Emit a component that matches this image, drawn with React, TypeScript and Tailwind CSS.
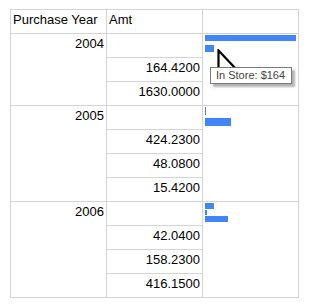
import { FC } from "react";

type Bar = { w: number; h: number; gap: number };

type Group = {
  year: string;
  amts: string[];
  bars: Bar[];
};

const groups: Group[] = [
  {
    year: "2004",
    amts: ["", "164.4200", "1630.0000"],
    bars: [
      { w: 91, h: 6, gap: 1 },
      { w: 9, h: 7, gap: 4 },
    ],
  },
  {
    year: "2005",
    amts: ["", "424.2300", "48.0800", "15.4200"],
    bars: [
      { w: 1, h: 8, gap: 1 },
      { w: 26, h: 8, gap: 3 },
    ],
  },
  {
    year: "2006",
    amts: ["", "42.0400", "158.2300", "416.1500"],
    bars: [
      { w: 9, h: 6, gap: 1 },
      { w: 2, h: 5, gap: 1 },
      { w: 23, h: 6, gap: 1 },
    ],
  },
];

const cell = "border-r border-b border-[#d4d4d4] px-[2px] pt-[2px] leading-[15px]";

const spanClass: Record<number, string> = {
  3: "row-span-3",
  4: "row-span-4",
};

const MiniBars: FC<{ bars: Bar[] }> = ({ bars }) => (
  <div className="flex flex-col items-start pl-[2px]">
    {bars.map((b, i) => (
      <div
        key={i}
        className="bg-[#4285f4]"
        style={{ width: b.w, height: b.h, marginTop: b.gap }}
      />
    ))}
  </div>
);

const Cursor: FC = () => (
  <svg
    className="absolute left-[217px] top-[49px]"
    width="26"
    height="32"
    viewBox="0 0 26 32"
  >
    <path
      d="M1.5 1.5 L1.5 27 L7 21.5 L11 30 L14.5 28.5 L10.5 20 L19 20 Z"
      fill="#ffffff"
      stroke="#000000"
      strokeWidth="2.2"
      strokeLinejoin="miter"
    />
  </svg>
);

const Tooltip: FC = () => (
  <div className="absolute left-[210px] top-[67px] h-[17px] w-[82px] border border-[#7a7a7a] bg-white shadow-[3px_3px_2px_rgba(0,0,0,0.3)] pl-[5px] text-[11px] leading-[15px] text-[#444444]">
    In Store: $164
  </div>
);

const App: FC = () => {
  return (
    <div
      className="relative h-[305px] w-[316px] bg-white text-[13px] text-black"
      style={{ fontFamily: '"Liberation Sans", Arial, sans-serif' }}
    >
      <div className="ml-[10px] pt-[9px]">
        <div className="grid w-[289px] grid-cols-[96px_96px_96px] auto-rows-[24px] border-l border-t border-[#d4d4d4]">
          <div className={cell}>Purchase Year</div>
          <div className={cell}>Amt</div>
          <div className={cell}></div>
          {groups.map((g) => [
            <div
              key={g.year + "-y"}
              className={`${cell} col-start-1 text-right ${spanClass[g.amts.length]}`}
            >
              {g.year}
            </div>,
            <div key={g.year + "-a0"} className={`${cell} col-start-2 text-right`}>
              {g.amts[0]}
            </div>,
            <div
              key={g.year + "-c"}
              className={`border-r border-b border-[#d4d4d4] col-start-3 ${spanClass[g.amts.length]}`}
            >
              <MiniBars bars={g.bars} />
            </div>,
            ...g.amts.slice(1).map((a, i) => (
              <div
                key={g.year + "-a" + (i + 1)}
                className={`${cell} col-start-2 text-right`}
              >
                {a}
              </div>
            )),
          ])}
        </div>
      </div>
      <Cursor />
      <Tooltip />
    </div>
  );
};

export default App;
